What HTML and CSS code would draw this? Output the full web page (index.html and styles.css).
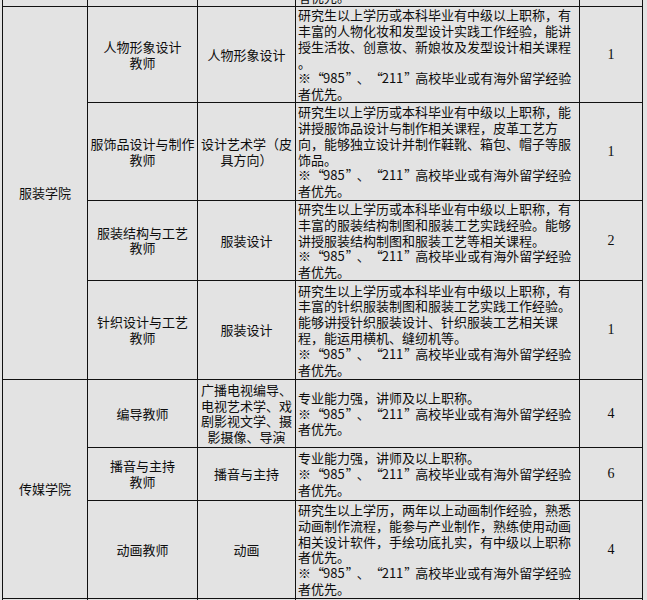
FILE: index.html
```html
<!DOCTYPE html>
<html lang="zh-CN">
<head>
<meta charset="utf-8">
<title>招聘岗位</title>
<link rel="stylesheet" href="styles.css">
</head>
<body>
<table class="jobs">
  <colgroup>
    <col class="c-college">
    <col class="c-post">
    <col class="c-major">
    <col class="c-req">
    <col class="c-num">
  </colgroup>
  <tbody>
    <tr class="r0">
      <td></td>
      <td></td>
      <td></td>
      <td class="req">者优先。</td>
      <td class="num"></td>
    </tr>
    <tr class="r1">
      <td rowspan="4" class="college">服装学院</td>
      <td>人物形象设计<br>教师</td>
      <td>人物形象设计</td>
      <td class="req">研究生以上学历或本科毕业有中级以上职称，有<br>丰富的人物化妆和发型设计实践工作经验，能讲<br>授生活妆、创意妆、新娘妆及发型设计相关课程<br>。<br>※<span class="qo">“</span>985<span class="qc">”</span>、<span class="qo">“</span>211<span class="qc">”</span>高校毕业或有海外留学经验<br>者优先。</td>
      <td class="num">1</td>
    </tr>
    <tr class="r2">
      <td>服饰品设计与制作<br>教师</td>
      <td>设计艺术学（皮<br>具方向）</td>
      <td class="req">研究生以上学历或本科毕业有中级以上职称，能<br>讲授服饰品设计与制作相关课程，皮革工艺方<br>向，能够独立设计并制作鞋靴、箱包、帽子等服<br>饰品。<br>※<span class="qo">“</span>985<span class="qc">”</span>、<span class="qo">“</span>211<span class="qc">”</span>高校毕业或有海外留学经验<br>者优先。</td>
      <td class="num">1</td>
    </tr>
    <tr class="r3">
      <td>服装结构与工艺<br>教师</td>
      <td>服装设计</td>
      <td class="req">研究生以上学历或本科毕业有中级以上职称，有<br>丰富的服装结构制图和服装工艺实践经验。能够<br>讲授服装结构制图和服装工艺等相关课程。<br>※<span class="qo">“</span>985<span class="qc">”</span>、<span class="qo">“</span>211<span class="qc">”</span>高校毕业或有海外留学经验<br>者优先。</td>
      <td class="num">2</td>
    </tr>
    <tr class="r4">
      <td>针织设计与工艺<br>教师</td>
      <td>服装设计</td>
      <td class="req">研究生以上学历或本科毕业有中级以上职称，有<br>丰富的针织服装制图和服装工艺实践工作经验。<br>能够讲授针织服装设计、针织服装工艺相关课<br>程，能运用横机、缝纫机等。<br>※<span class="qo">“</span>985<span class="qc">”</span>、<span class="qo">“</span>211<span class="qc">”</span>高校毕业或有海外留学经验<br>者优先。</td>
      <td class="num">1</td>
    </tr>
    <tr class="r5">
      <td rowspan="3" class="college">传媒学院</td>
      <td>编导教师</td>
      <td>广播电视编导、<br>电视艺术学、戏<br>剧影视文学、摄<br>影摄像、导演</td>
      <td class="req">专业能力强，讲师及以上职称。<br>※<span class="qo">“</span>985<span class="qc">”</span>、<span class="qo">“</span>211<span class="qc">”</span>高校毕业或有海外留学经验<br>者优先。</td>
      <td class="num">4</td>
    </tr>
    <tr class="r6">
      <td>播音与主持<br>教师</td>
      <td>播音与主持</td>
      <td class="req">专业能力强，讲师及以上职称。<br>※<span class="qo">“</span>985<span class="qc">”</span>、<span class="qo">“</span>211<span class="qc">”</span>高校毕业或有海外留学经验<br>者优先。</td>
      <td class="num">6</td>
    </tr>
    <tr class="r7">
      <td>动画教师</td>
      <td>动画</td>
      <td class="req">研究生以上学历，两年以上动画制作经验，熟悉<br>动画制作流程，能参与产业制作，熟练使用动画<br>相关设计软件，手绘功底扎实，有中级以上职称<br>者优先。<br>※<span class="qo">“</span>985<span class="qc">”</span>、<span class="qo">“</span>211<span class="qc">”</span>高校毕业或有海外留学经验<br>者优先。</td>
      <td class="num">4</td>
    </tr>
    <tr class="r8">
      <td></td>
      <td></td>
      <td></td>
      <td class="req"></td>
      <td class="num"></td>
    </tr>
  </tbody>
</table>
</body>
</html>
```
FILE: styles.css
```css
html, body {
  margin: 0;
  padding: 0;
  background: #e3e3e3;
}

body {
  height: 600px;
  overflow: hidden;
}

.jobs {
  border-collapse: collapse;
  table-layout: fixed;
  width: 640px;
  margin: -14px 0 0 2px;
  font-family: "Noto Sans CJK SC", "Noto Sans", sans-serif;
  font-size: 13px;
  line-height: 15.8px;
  color: #0d0d0d;
  background: #e3e3e3;
}

.c-college { width: 85px; }
.c-post { width: 110px; }
.c-major { width: 98px; }
.c-req { width: 284px; }
.c-num { width: 63px; }

.jobs td {
  border: 1px solid #111;
  padding: 0;
  text-align: center;
  vertical-align: middle;
  white-space: nowrap;
  overflow: hidden;
}

.jobs td.req {
  text-align: left;
  padding-left: 2px;
}

/* full-width curly quotes, as in the original SimSun rendering */
.jobs .qo,
.jobs .qc {
  display: inline-block;
  width: 12px;
  box-sizing: border-box;
}

.jobs .qo {
  text-align: right;
  padding-right: 1px;
}

.jobs .qc {
  text-align: left;
  padding-left: 1px;
}

.jobs td.num {
  font-family: "Liberation Serif", serif;
  font-size: 14px;
}

.r0 { height: 20px; }
.r1 { height: 96px; }
.r2 { height: 98px; }
.r3 { height: 79px; }
.r4 { height: 99px; }
.r5 { height: 68px; }
.r6 { height: 53px; }
.r7 { height: 98px; }
.r8 { height: 20px; }
```
